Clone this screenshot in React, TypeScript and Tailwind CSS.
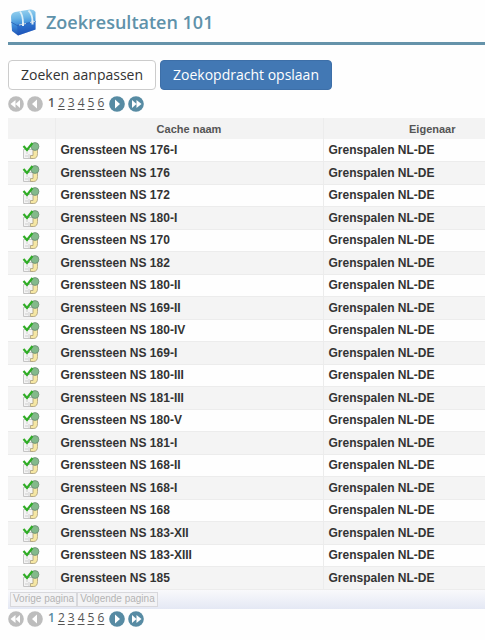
import { ReactNode } from 'react';

const OWNER = 'Grenspalen NL-DE';

const caches = [
  'Grenssteen NS 176-I',
  'Grenssteen NS 176',
  'Grenssteen NS 172',
  'Grenssteen NS 180-I',
  'Grenssteen NS 170',
  'Grenssteen NS 182',
  'Grenssteen NS 180-II',
  'Grenssteen NS 169-II',
  'Grenssteen NS 180-IV',
  'Grenssteen NS 169-I',
  'Grenssteen NS 180-III',
  'Grenssteen NS 181-III',
  'Grenssteen NS 180-V',
  'Grenssteen NS 181-I',
  'Grenssteen NS 168-II',
  'Grenssteen NS 168-I',
  'Grenssteen NS 168',
  'Grenssteen NS 183-XII',
  'Grenssteen NS 183-XIII',
  'Grenssteen NS 185',
];

function ChestIcon() {
  return (
    <svg width="28" height="28" viewBox="0 0 28 28" aria-hidden="true">
      <defs>
        <linearGradient id="chest" x1="0" y1="0" x2="0.1" y2="1">
          <stop offset="0" stopColor="#9fd6f0" />
          <stop offset="0.35" stopColor="#6cb6e6" />
          <stop offset="0.6" stopColor="#3f8edb" />
          <stop offset="1" stopColor="#1f55b6" />
        </linearGradient>
      </defs>
      <path d="M1 9Q1 5 5 4L20 1.500Q24 1 25.500 4V21.500L8 27.500L2 23Z" fill="url(#chest)" />
      <path d="M7 17L25.500 13V21.500L8 27.500Z" fill="#1b54bf" opacity="0.45" />
      <path d="M1 14L7 17.500L25.500 13.500" fill="none" stroke="#2c62b4" strokeWidth="0.800" />
      <path d="M10 3.500Q13 7 13 16M18.500 2.500Q22.500 6 22.500 14" fill="none" stroke="#dceff7" strokeWidth="1.800" />
      <path d="M9 17L16 15.500M20 14.500L25 13.500" stroke="#c3d5e6" strokeWidth="1.200" />
      <path d="M13 14.500V18M22.500 12.500V16.500" stroke="#e2edf4" strokeWidth="2" />
    </svg>
  );
}

function FoundIcon() {
  return (
    <svg className="mx-auto block" width="18" height="20" viewBox="0 0 18 20" aria-hidden="true">
      <path d="M1.500 9.500h10v9h-10z" fill="#f4f4f4" stroke="#c4c4c4" />
      <path d="M3 16h3M7 14v4M5 12v2" stroke="#cfcfcf" />
      <path d="M11 9h4.500v4.500q0 5-4 5H8.500v-3h2.500z" fill="#f6e7a4" stroke="#a89c78" strokeWidth="0.800" />
      <circle cx="13" cy="6.500" r="3.900" fill="#83b98b" stroke="#6f8b76" strokeWidth="0.800" />
      <path d="M1.500 6L5 10L10.500 3" fill="none" stroke="#2fac25" strokeWidth="2.200" />
    </svg>
  );
}

function PagerButton({ label, disabled, children }: { label: string; disabled?: boolean; children: ReactNode }) {
  return (
    <button type="button" aria-label={label} disabled={disabled} className="block size-4 shrink-0">
      <svg width="16" height="16" viewBox="0 0 16 16" aria-hidden="true">
        <circle cx="8" cy="8" r="7.800" fill={disabled ? '#bdbdbd' : '#578ba3'} />
        <g fill="#fff">{children}</g>
      </svg>
    </button>
  );
}

function Pager({ currentClass }: { currentClass: string }) {
  return (
    <nav aria-label="Pagina's" className="flex h-5 font-['Open_Sans',sans-serif] text-xs leading-4 text-[#555]">
      <div className="mt-[2px] flex gap-[3px]">
        <PagerButton label="Eerste pagina" disabled>
          <path d="M7.500 4v8L2.500 8zM12 4v8L7.500 8z" />
        </PagerButton>
        <PagerButton label="Vorige pagina" disabled>
          <path d="M10 3.500v9L5 8z" />
        </PagerButton>
      </div>
      <div className="mx-[5px] mt-px flex gap-[3px]">
        <span className={currentClass}>1</span>
        {[2, 3, 4, 5, 6].map(page => (
          <a key={page} href={`#pagina-${page}`} className="underline underline-offset-2">
            {page}
          </a>
        ))}
      </div>
      <div className="mt-[2px] flex gap-[3px]">
        <PagerButton label="Volgende pagina">
          <path d="M6 3.500v9l5-4.500z" />
        </PagerButton>
        <PagerButton label="Laatste pagina">
          <path d="M4 4v8l4.500-4zM8.500 4v8l5-4z" />
        </PagerButton>
      </div>
    </nav>
  );
}

export default function App() {
  return (
    <main className="min-h-screen overflow-hidden bg-[#fefefe] pl-2 font-['Liberation_Sans',Arial,sans-serif] text-[#333]">
      <header className="flex h-[45px] items-center gap-2 border-b-3 border-[#6593aa] pt-[2px] pl-[2px]">
        <ChestIcon />
        <h1 className="font-['Open_Sans',sans-serif] text-lg leading-6 font-semibold text-[#5f92aa]">Zoekresultaten 101</h1>
      </header>

      <div className="mt-[15px] flex gap-1 font-['Open_Sans',sans-serif] text-sm">
        <button type="button" className="h-[30px] rounded-sm border border-[#ccc] bg-white px-3 whitespace-nowrap">
          Zoeken aanpassen
        </button>
        <button type="button" className="h-[30px] rounded-sm border border-[#3d6fa8] bg-[#4278b4] px-3 whitespace-nowrap text-white">
          Zoekopdracht opslaan
        </button>
      </div>

      <div className="pt-1 pb-1">
        <Pager currentClass="font-semibold" />
      </div>

      <div className="overflow-hidden">
        <table aria-label="Zoekresultaten" className="w-full min-w-[533px] table-fixed border-collapse text-left">
          <colgroup>
            <col className="w-[47px]" />
            <col className="w-[268px]" />
            <col />
          </colgroup>
          <thead>
            <tr className="h-[21px] bg-[#f3f3f3] text-center text-[11px] leading-4 text-[#555]">
              <th aria-label="Status" className="border-r border-[#ececec] p-0" />
              <th className="border-r border-[#ececec] p-0">Cache naam</th>
              <th className="p-0">Eigenaar</th>
            </tr>
          </thead>
          <tbody className="text-xs leading-4 font-bold">
            {caches.map(name => (
              <tr key={name} className="border-b border-[#ececec] odd:h-[22px] even:h-[23px] even:bg-[#f4f4f4]">
                <td className="border-r border-[#ececec] p-0">
                  <FoundIcon />
                </td>
                <td className="border-r border-[#ececec] py-0 pr-0 pl-[5px]">{name}</td>
                <td className="py-0 pr-0 pl-[5px]">{OWNER}</td>
              </tr>
            ))}
          </tbody>
          <tfoot>
            <tr className="h-5 bg-linear-to-b from-[#fafafc] to-[#e4e8f4]">
              <td colSpan={3} className="p-0">
                <div className="flex pl-[2px] text-[10px] leading-3 text-[#b4b4b4]">
                  <button type="button" disabled className="h-[15px] border border-[#d8d8dc] bg-[#f3f3f5] px-[2px]">
                    Vorige pagina
                  </button>
                  <button type="button" disabled className="h-[15px] border border-[#d8d8dc] bg-[#f3f3f5] px-[2px]">
                    Volgende pagina
                  </button>
                </div>
              </td>
            </tr>
          </tfoot>
        </table>
      </div>

      <Pager currentClass="font-semibold text-[#578ba3]" />
    </main>
  );
}
